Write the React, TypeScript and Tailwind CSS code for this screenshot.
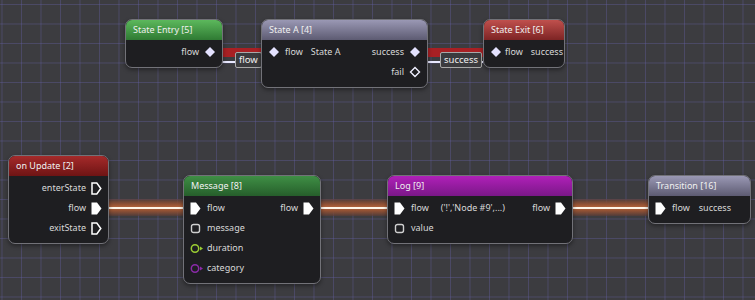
import React from "react";

type PinKind = "diamond" | "diamondHollow" | "exec" | "execHollow" | "square" | "circleGreen" | "circlePurple" | "none";

function Pin({ kind }: { kind: PinKind }) {
  if (kind === "none") return null;
  if (kind === "diamond")
    return (
      <svg width="12" height="12" viewBox="0 0 12 12" className="shrink-0">
        <path d="M6 1 L11 6 L6 11 L1 6 Z" fill="#e4e2ff" />
      </svg>
    );
  if (kind === "diamondHollow")
    return (
      <svg width="12" height="12" viewBox="0 0 12 12" className="shrink-0">
        <path d="M6 1.5 L10.5 6 L6 10.5 L1.5 6 Z" fill="none" stroke="#f0f0ff" strokeWidth="1.4" />
      </svg>
    );
  if (kind === "exec")
    return (
      <svg width="11" height="13" viewBox="0 0 11 13" className="shrink-0">
        <path d="M0.5 0.5 H6 L10.5 6.5 L6 12.5 H0.5 Z" fill="#ffffff" />
      </svg>
    );
  if (kind === "execHollow")
    return (
      <svg width="11" height="13" viewBox="0 0 11 13" className="shrink-0">
        <path d="M1 1 H5.8 L9.8 6.5 L5.8 12 H1 Z" fill="none" stroke="#ffffff" strokeWidth="1.5" />
      </svg>
    );
  if (kind === "square")
    return (
      <svg width="11" height="11" viewBox="0 0 11 11" className="shrink-0">
        <rect x="1.5" y="1.5" width="8" height="8" rx="2" fill="none" stroke="#cfcfcf" strokeWidth="1.4" />
      </svg>
    );
  const c = kind === "circleGreen" ? "#9acd32" : "#8a2aa8";
  return (
    <svg width="14" height="11" viewBox="0 0 14 11" className="shrink-0">
      <circle cx="5" cy="5.5" r="3.7" fill="none" stroke={c} strokeWidth="1.5" />
      <path d="M10 3.5 L13 5.5 L10 7.5 Z" fill={c} />
    </svg>
  );
}

type Row = { inPin?: PinKind; inLabel?: string; mid?: string; midGap?: string; outLabel?: string; outPin?: PinKind };

function Node({
  title,
  header,
  rows,
  className,
}: {
  title: string;
  header: string;
  rows: Row[];
  className: string;
}) {
  return (
    <div
      className={`absolute rounded-[7px] border border-[#727278] bg-[#1e1e21] overflow-hidden shadow-[0_2px_4px_rgba(0,0,0,0.4)] whitespace-nowrap ${className}`}
    >
      <div className={`h-[20px] flex items-center px-[7px] text-[9px] text-[#f0f0f0] ${header}`}>{title}</div>
      <div className="pt-[2px] pb-[5px] px-[6px]">
        {rows.map((r, i) => (
          <div key={i} className="h-[20px] flex items-center text-[9px] text-[#d8d8d8]">
            {r.inPin ? (
              <span className="w-[14px] flex items-center">
                <Pin kind={r.inPin} />
              </span>
            ) : null}
            {r.inLabel ? <span className="ml-[3px]">{r.inLabel}</span> : null}
            {r.mid ? <span className={r.midGap ?? "ml-[8px]"}>{r.mid}</span> : null}
            <span className="flex-1" />
            {r.outLabel ? <span className="mr-[5px]">{r.outLabel}</span> : null}
            {r.outPin ? (
              <span className="flex items-center justify-end">
                <Pin kind={r.outPin} />
              </span>
            ) : null}
          </div>
        ))}
      </div>
    </div>
  );
}

function Band({ className }: { className: string }) {
  return (
    <div className={`absolute h-[17px] ${className} bg-[linear-gradient(to_bottom,rgba(90,60,55,0.6)_0%,#8f5034_30%,#b0623c_48%,#b0623c_52%,#8f5034_70%,rgba(90,60,55,0.6)_100%)]`}>
      <div className="absolute left-0 right-0 top-[7.5px] h-[2px] bg-[#fff4e8]" />
    </div>
  );
}

function Label({ text, className }: { text: string; className: string }) {
  return (
    <div
      className={`absolute h-[16px] px-[3px] flex items-center rounded-[2px] border border-[#a8a8a8] bg-[#3b3b3e] text-[9.5px] text-[#f0f0f0] ${className}`}
    >
      {text}
    </div>
  );
}

export default function App() {
  return (
    <div
      className="relative w-[755px] h-[300px] overflow-hidden bg-[#3c3c40] bg-[linear-gradient(to_right,rgba(105,100,175,0.34)_1px,transparent_1px),linear-gradient(to_bottom,rgba(105,100,175,0.34)_1px,transparent_1px)] bg-[size:19.5px_19.5px] bg-[position:1.5px_4px]"
      style={{ fontFamily: '"Noto Sans", "Open Sans", sans-serif' }}
    >
      {/* top red bands */}
      <div className="absolute left-[222px] top-[48px] w-[40px] h-[9px] bg-[#a82024]" />
      <div className="absolute left-[427px] top-[48px] w-[57px] h-[9px] bg-[#a82024]" />
      <div className="absolute left-[222px] top-[61px] w-[40px] h-[1.5px] bg-[#e8e8ff]" />
      <div className="absolute left-[427px] top-[61px] w-[56px] h-[1.5px] bg-[#e8e8ff]" />
      <svg className="absolute left-[256px] top-[57px]" width="8" height="9" viewBox="0 0 8 9">
        <path d="M1 1 L7 4.5 L1 8 Z" fill="#e8e8ff" />
      </svg>
      <svg className="absolute left-[476px] top-[57px]" width="8" height="9" viewBox="0 0 8 9">
        <path d="M1 1 L7 4.5 L1 8 Z" fill="#e8e8ff" />
      </svg>
      <Label text="flow" className="left-[235px] top-[52px]" />
      <Label text="success" className="left-[440px] top-[52px]" />

      {/* bottom bands */}
      <Band className="left-[108px] top-[199px] w-[76px]" />
      <Band className="left-[320px] top-[199px] w-[68px]" />
      <Band className="left-[572px] top-[199px] w-[77px]" />

      <Node
        title="State Entry [5]"
        header="bg-[linear-gradient(to_bottom,#5cb85c,#2f7a33)]"
        className="left-[125px] top-[19px] w-[98px]"
        rows={[{ outLabel: "flow", outPin: "diamond" }]}
      />
      <Node
        title="State A [4]"
        header="bg-[linear-gradient(to_bottom,#9a98b4,#5d5b72)]"
        className="left-[261px] top-[19px] w-[167px]"
        rows={[
          { inPin: "diamond", inLabel: "flow", mid: "State A", outLabel: "success", outPin: "diamond" },
          { outLabel: "fail", outPin: "diamondHollow" },
        ]}
      />
      <Node
        title="State Exit [6]"
        header="bg-[linear-gradient(to_bottom,#c0504d,#7d2424)]"
        className="left-[483px] top-[19px] w-[82px]"
        rows={[{ inPin: "diamond", inLabel: "flow", mid: "success" }]}
      />
      <Node
        title="on Update [2]"
        header="bg-[linear-gradient(to_bottom,#a52a2a,#6e1414)]"
        className="left-[8px] top-[155px] w-[101px]"
        rows={[
          { outLabel: "enterState", outPin: "execHollow" },
          { outLabel: "flow", outPin: "exec" },
          { outLabel: "exitState", outPin: "execHollow" },
        ]}
      />
      <Node
        title="Message [8]"
        header="bg-[linear-gradient(to_bottom,#3f8f45,#265e2b)]"
        className="left-[183px] top-[175px] w-[138px]"
        rows={[
          { inPin: "exec", inLabel: "flow", outLabel: "flow", outPin: "exec" },
          { inPin: "square", inLabel: "message" },
          { inPin: "circleGreen", inLabel: "duration" },
          { inPin: "circlePurple", inLabel: "category" },
        ]}
      />
      <Node
        title="Log [9]"
        header="bg-[linear-gradient(to_bottom,#b020b8,#7a1888)]"
        className="left-[387px] top-[175px] w-[186px]"
        rows={[
          { inPin: "exec", inLabel: "flow", mid: "('!','Node #9',...)", midGap: "ml-[12px]", outLabel: "flow", outPin: "exec" },
          { inPin: "square", inLabel: "value" },
        ]}
      />
      <Node
        title="Transition [16]"
        header="bg-[linear-gradient(to_bottom,#9a98b4,#5d5b72)]"
        className="left-[648px] top-[175px] w-[103px]"
        rows={[{ inPin: "exec", inLabel: "flow", mid: "success", midGap: "ml-[9px]" }]}
      />
    </div>
  );
}
